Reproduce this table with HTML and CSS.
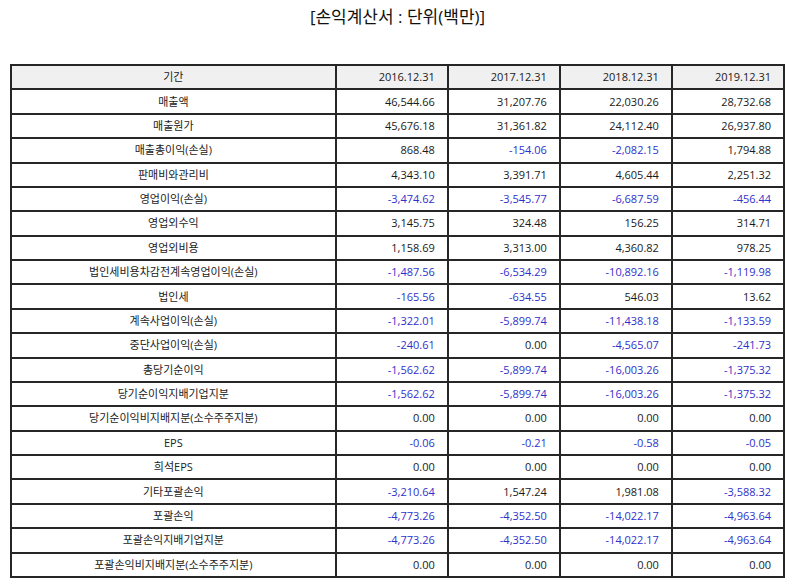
FILE: index.html
```html
<!DOCTYPE html>
<html lang="ko">
<head>
<meta charset="utf-8">
<title>손익계산서</title>
<link rel="stylesheet" href="styles.css">
</head>
<body>
<div class="page">
  <h1 class="title">[손익계산서 : 단위(백만)]</h1>
  <table class="fin">
    <colgroup>
      <col class="c-label"><col class="c-num"><col class="c-num"><col class="c-num"><col class="c-num">
    </colgroup>
    <thead>
      <tr><th class="lbl">기간</th><th>2016.12.31</th><th>2017.12.31</th><th>2018.12.31</th><th>2019.12.31</th></tr>
    </thead>
    <tbody>
      <tr><td class="lbl">매출액</td><td>46,544.66</td><td>31,207.76</td><td>22,030.26</td><td>28,732.68</td></tr>
      <tr><td class="lbl">매출원가</td><td>45,676.18</td><td>31,361.82</td><td>24,112.40</td><td>26,937.80</td></tr>
      <tr><td class="lbl">매출총이익(손실)</td><td>868.48</td><td class="neg">-154.06</td><td class="neg">-2,082.15</td><td>1,794.88</td></tr>
      <tr><td class="lbl">판매비와관리비</td><td>4,343.10</td><td>3,391.71</td><td>4,605.44</td><td>2,251.32</td></tr>
      <tr><td class="lbl">영업이익(손실)</td><td class="neg">-3,474.62</td><td class="neg">-3,545.77</td><td class="neg">-6,687.59</td><td class="neg">-456.44</td></tr>
      <tr><td class="lbl">영업외수익</td><td>3,145.75</td><td>324.48</td><td>156.25</td><td>314.71</td></tr>
      <tr><td class="lbl">영업외비용</td><td>1,158.69</td><td>3,313.00</td><td>4,360.82</td><td>978.25</td></tr>
      <tr><td class="lbl">법인세비용차감전계속영업이익(손실)</td><td class="neg">-1,487.56</td><td class="neg">-6,534.29</td><td class="neg">-10,892.16</td><td class="neg">-1,119.98</td></tr>
      <tr><td class="lbl">법인세</td><td class="neg">-165.56</td><td class="neg">-634.55</td><td>546.03</td><td>13.62</td></tr>
      <tr><td class="lbl">계속사업이익(손실)</td><td class="neg">-1,322.01</td><td class="neg">-5,899.74</td><td class="neg">-11,438.18</td><td class="neg">-1,133.59</td></tr>
      <tr><td class="lbl">중단사업이익(손실)</td><td class="neg">-240.61</td><td>0.00</td><td class="neg">-4,565.07</td><td class="neg">-241.73</td></tr>
      <tr><td class="lbl">총당기순이익</td><td class="neg">-1,562.62</td><td class="neg">-5,899.74</td><td class="neg">-16,003.26</td><td class="neg">-1,375.32</td></tr>
      <tr><td class="lbl">당기순이익지배기업지분</td><td class="neg">-1,562.62</td><td class="neg">-5,899.74</td><td class="neg">-16,003.26</td><td class="neg">-1,375.32</td></tr>
      <tr><td class="lbl">당기순이익비지배지분(소수주주지분)</td><td>0.00</td><td>0.00</td><td>0.00</td><td>0.00</td></tr>
      <tr><td class="lbl">EPS</td><td class="neg">-0.06</td><td class="neg">-0.21</td><td class="neg">-0.58</td><td class="neg">-0.05</td></tr>
      <tr><td class="lbl">희석EPS</td><td>0.00</td><td>0.00</td><td>0.00</td><td>0.00</td></tr>
      <tr><td class="lbl">기타포괄손익</td><td class="neg">-3,210.64</td><td>1,547.24</td><td>1,981.08</td><td class="neg">-3,588.32</td></tr>
      <tr><td class="lbl">포괄손익</td><td class="neg">-4,773.26</td><td class="neg">-4,352.50</td><td class="neg">-14,022.17</td><td class="neg">-4,963.64</td></tr>
      <tr><td class="lbl">포괄손익지배기업지분</td><td class="neg">-4,773.26</td><td class="neg">-4,352.50</td><td class="neg">-14,022.17</td><td class="neg">-4,963.64</td></tr>
      <tr><td class="lbl">포괄손익비지배지분(소수주주지분)</td><td>0.00</td><td>0.00</td><td>0.00</td><td>0.00</td></tr>
    </tbody>
  </table>
</div>
</body>
</html>
```

FILE: styles.css
```css
html, body {
  margin: 0;
  padding: 0;
  background: #ffffff;
}

body {
  font-family: "Open Sans", "Noto Sans CJK KR", sans-serif;
  color: #111111;
}

.page {
  padding: 0 9px 0 10px;
}

.title {
  margin: 0;
  padding-top: 6px;
  height: 64px;
  box-sizing: border-box;
  text-align: center;
  font-size: 17px;
  font-weight: normal;
  line-height: 22px;
  color: #111111;
}

.fin {
  width: 100%;
  border-collapse: collapse;
  table-layout: fixed;
  font-size: 11px;
}

.c-label {
  width: 42%;
}

.c-num {
  width: 14.5%;
}

.fin th,
.fin td {
  border: 2px solid #262626;
  height: 22.38px;
  padding: 0 12px 0 6px;
  text-align: right;
  font-weight: normal;
  line-height: 14px;
  white-space: nowrap;
  color: #1a1a1a;
}

.fin thead th {
  background: #f0f0f0;
}

.fin .lbl {
  text-align: center;
  padding: 0 6px;
  color: #222222;
}

.fin .neg {
  color: #3030cc;
}
```
